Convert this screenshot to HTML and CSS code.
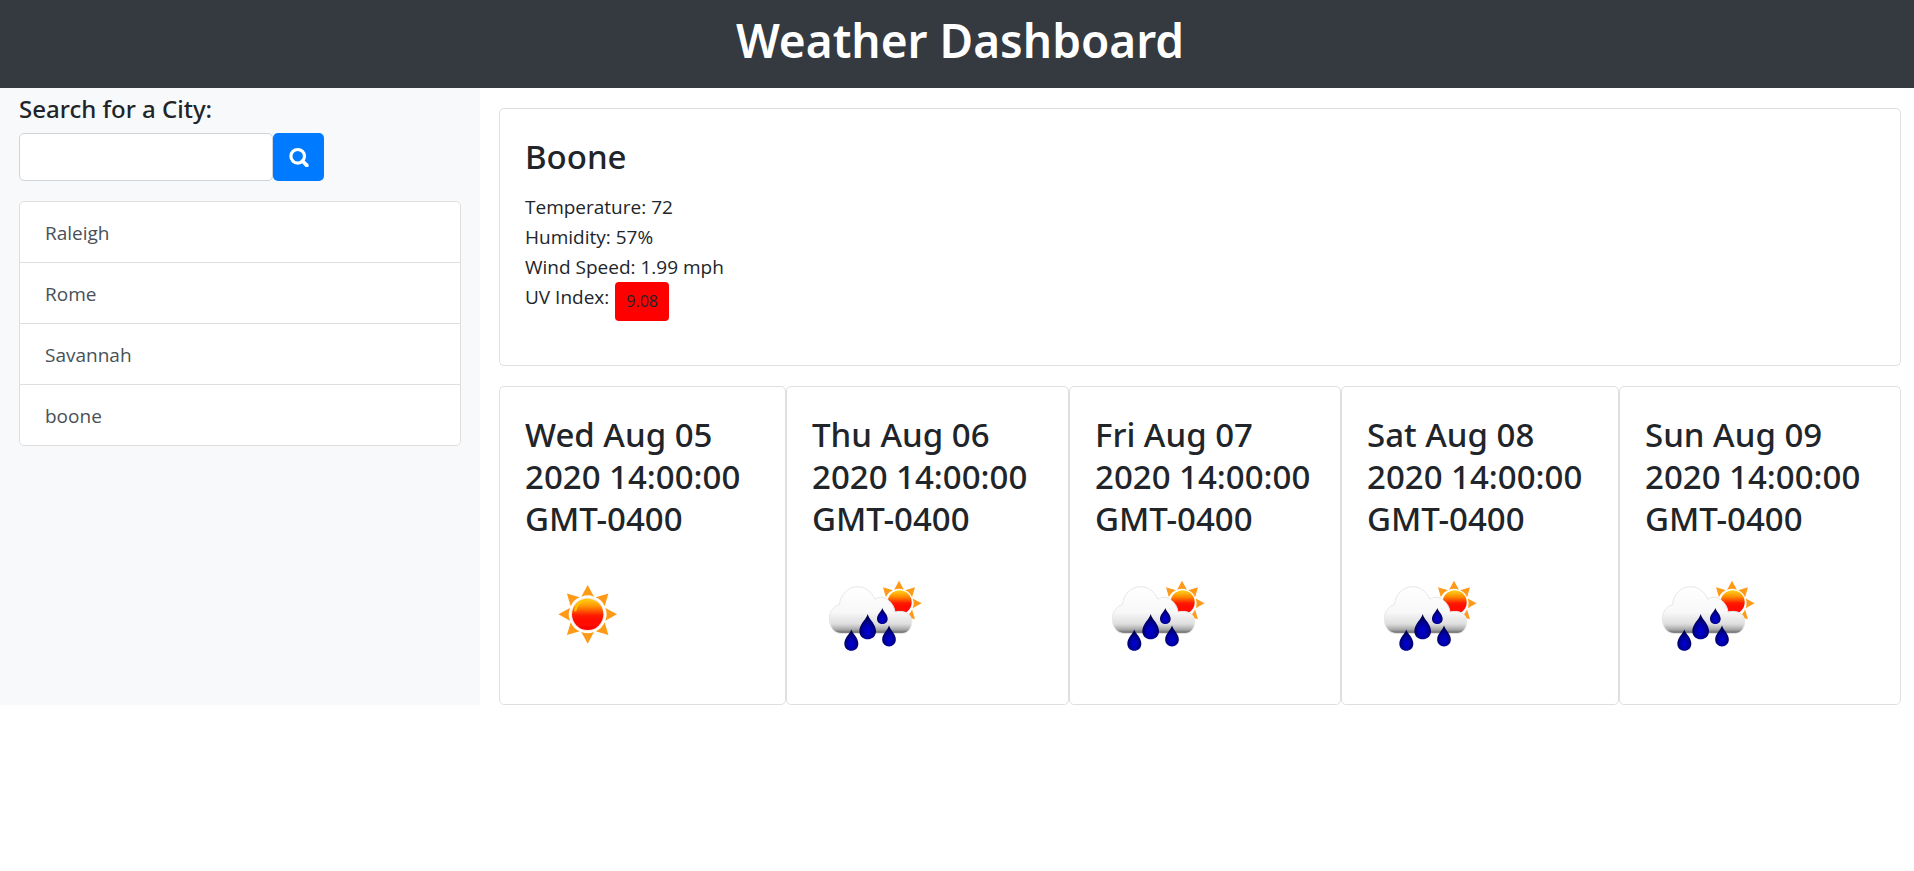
FILE: index.html
```html
<!DOCTYPE html>
<html lang="en">
<head>
<meta charset="utf-8">
<title>Weather Dashboard</title>
<link rel="stylesheet" href="styles.css">
</head>
<body>
<svg class="defs" aria-hidden="true">
  <defs>
    <linearGradient id="sunFill" x1="0" y1="0" x2="0" y2="1">
      <stop offset="0" stop-color="#ffd21c"/>
      <stop offset=".25" stop-color="#ff9200"/>
      <stop offset=".55" stop-color="#ff1500"/>
      <stop offset="1" stop-color="#ff0000"/>
    </linearGradient>
    <linearGradient id="cloudFill" x1="0" y1="0" x2="0" y2="1">
      <stop offset="0" stop-color="#ffffff"/>
      <stop offset=".55" stop-color="#f8f8f8"/>
      <stop offset=".8" stop-color="#dedede"/>
      <stop offset=".92" stop-color="#a8a8a8"/>
      <stop offset="1" stop-color="#5c5c5c"/>
    </linearGradient>
    <radialGradient id="dropFill" cx=".5" cy=".68" r=".55">
      <stop offset="0" stop-color="#0000d8"/>
      <stop offset=".45" stop-color="#0000ac"/>
      <stop offset="1" stop-color="#000050"/>
    </radialGradient>
    <filter id="soft" x="-10%" y="-10%" width="120%" height="120%"><feGaussianBlur stdDeviation="2"/></filter>
    <g id="rays" fill="#ff9a18">
      <path id="ray" d="M0-88L19-53Q0-61-19-53Z"/>
      <use href="#ray" transform="rotate(45)"/>
      <use href="#ray" transform="rotate(90)"/>
      <use href="#ray" transform="rotate(135)"/>
      <use href="#ray" transform="rotate(180)"/>
      <use href="#ray" transform="rotate(225)"/>
      <use href="#ray" transform="rotate(270)"/>
      <use href="#ray" transform="rotate(315)"/>
    </g>
    <path id="drop" d="M0-38C4-22 25-8 25 13C25 29 13 38 0 38S-25 29-25 13C-25-8-4-22 0-38Z" fill="url(#dropFill)"/>
    <symbol id="sun" viewBox="-45 -57 375 375">
      <g filter="url(#soft)">
        <use href="#rays" x="143" y="130"/>
        <circle cx="143" cy="130" r="50" fill="#ffe3d8"/>
        <circle cx="143" cy="130" r="47" fill="url(#sunFill)"/>
        <path d="M106 118Q111 91 138 87" fill="none" stroke="#ffc400" stroke-width="7" stroke-linecap="round"/>
      </g>
    </symbol>
    <symbol id="rain" viewBox="-9 -42 375 375">
      <g filter="url(#soft)">
        <g transform="translate(252 112) scale(.77)"><use href="#rays"/></g>
        <circle cx="254" cy="109" r="36" fill="url(#sunFill)"/>
        <path d="M78 202C55 202 43 180 43 158C43 138 56 120 73 116C77 84 100 62 128 62C152 62 170 78 180 100C192 90 210 92 222 104C232 113 239 125 240 138C262 132 290 140 290 165C290 186 280 202 262 202Z" fill="url(#cloudFill)" stroke="#e6e6e6" stroke-width="3"/>
        <use href="#drop" x="158" y="182"/>
        <g transform="translate(109 222) scale(.84)"><use href="#drop"/></g>
        <g transform="translate(222 210) scale(.82)"><use href="#drop"/></g>
        <g transform="translate(202 150) scale(.64)"><use href="#drop"/></g>
      </g>
    </symbol>
  </defs>
</svg>
<header class="banner"><h1>Weather Dashboard</h1></header>
<div class="layout">
  <aside class="sidebar">
    <form class="search">
      <label class="search-label" for="city">Search for a City:</label>
      <div class="search-row">
        <input class="search-input" id="city" type="text">
        <button class="search-button" type="button" aria-label="Search">
          <svg class="search-icon" viewBox="0 0 20 20" fill="none" stroke="#fff"><circle cx="8.7" cy="9.3" r="6.8" stroke-width="3.2"/><path d="M13.5 14l4.3 4.3" stroke-width="3.8" stroke-linecap="round"/></svg>
        </button>
      </div>
    </form>
    <ul class="history">
      <li>Raleigh</li>
      <li>Rome</li>
      <li>Savannah</li>
      <li>boone</li>
    </ul>
  </aside>
  <main class="content">
    <section class="card current">
      <h2>Boone</h2>
      <p>Temperature: 72</p>
      <p>Humidity: 57%</p>
      <p>Wind Speed: 1.99 mph</p>
      <p class="uv">UV Index: <span class="uv-badge">9.08</span></p>
    </section>
    <section class="forecast">
      <article class="card"><h2>Wed Aug 05 2020 14:00:00 GMT-0400</h2><svg class="weather"><use href="#sun"/></svg></article>
      <article class="card"><h2>Thu Aug 06 2020 14:00:00 GMT-0400</h2><svg class="weather"><use href="#rain"/></svg></article>
      <article class="card"><h2>Fri Aug 07 2020 14:00:00 GMT-0400</h2><svg class="weather"><use href="#rain"/></svg></article>
      <article class="card"><h2>Sat Aug 08 2020 14:00:00 GMT-0400</h2><svg class="weather"><use href="#rain"/></svg></article>
      <article class="card"><h2>Sun Aug 09 2020 14:00:00 GMT-0400</h2><svg class="weather"><use href="#rain"/></svg></article>
    </section>
  </main>
</div>
</body>
</html>
```
FILE: styles.css
```css
* { box-sizing: border-box; }
body {
  margin: 0;
  background: #fff;
  color: #212529;
  font-family: "Open Sans", "Noto Sans", sans-serif;
  font-size: 19px;
  line-height: 30px;
}
h1, h2, p, ul { margin: 0; }
h1, h2, .search-label { font-family: "Noto Sans", "Open Sans", sans-serif; }
.defs { position: absolute; width: 0; height: 0; }
.banner {
  padding: 10px 0 18px 6px;
  background: #343a40;
  color: #fff;
  text-align: center;
}
.banner h1 { font-size: 46px; line-height: 60px; font-weight: 600; }
.layout { display: grid; grid-template-columns: 480px 1fr; }
.sidebar { padding: 6px 19px 0; background: #f8f9fb; }
.search-label {
  display: block;
  margin-bottom: 9px;
  font-size: 24px;
  font-weight: 500;
}
.search-row { display: flex; height: 48px; margin-bottom: 20px; }
.search-input {
  width: 254px;
  padding: 0 15px;
  border: 1px solid #ced4da;
  border-radius: 5px;
  background: #fff;
  font: inherit;
}
.search-button {
  display: flex;
  align-items: center;
  justify-content: center;
  width: 51px;
  padding: 0;
  border: 0;
  border-radius: 5px;
  background: #007bff;
}
.search-icon { width: 20px; height: 20px; }
.history {
  padding: 0;
  border: 1px solid #dfdfdf;
  border-radius: 5px;
  background: #fff;
  color: #495057;
  list-style: none;
}
.history li { padding: 16px 25px 14px; }
.history li + li { border-top: 1px solid #dfdfdf; }
.content { padding: 20px 13px 0 19px; }
.card {
  padding: 27px 25px;
  border: 1px solid #dfdfdf;
  border-radius: 5px;
  background: #fff;
}
.card h2 { font-size: 33px; line-height: 42px; font-weight: 500; }
.current { margin-bottom: 20px; padding-bottom: 44px; }
.current h2 { margin-bottom: 14px; }
.uv { display: flex; gap: 6px; }
.uv-badge {
  padding: 4px 11px 5px;
  border-radius: 4px;
  background: #f00;
  font-size: 16px;
}
.forecast { display: grid; grid-template-columns: 287fr 283fr 272fr 278fr 282fr; }
.forecast h2 { margin-bottom: 12px; }
.weather { display: block; width: 125px; height: 125px; }
```
